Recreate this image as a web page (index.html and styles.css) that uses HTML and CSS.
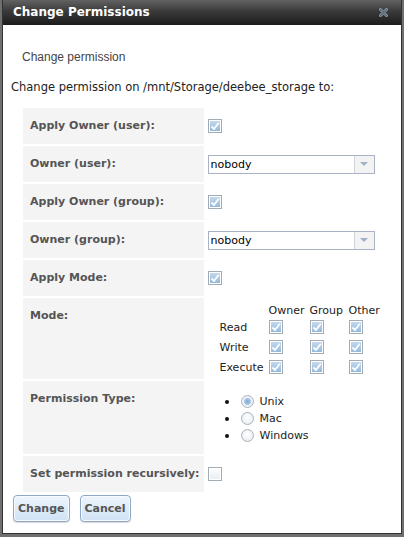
FILE: index.html
```html
<!DOCTYPE html>
<html>
<head>
<meta charset="utf-8">
<link rel="stylesheet" href="styles.css">
</head>
<body>
<div class="dialog">
  <div class="titlebar">
    <span class="title">Change Permissions</span>
    <svg class="close" width="9" height="9" viewBox="0 0 9 9"><path d="M1.5 1.5 L7.5 7.5 M7.5 1.5 L1.5 7.5" stroke="#8797a8" stroke-width="3" stroke-linecap="round"/><path d="M1.5 1.5 L7.5 7.5 M7.5 1.5 L1.5 7.5" stroke="#5b6b7c" stroke-width="1.4" stroke-linecap="round"/></svg>
  </div>
  <div class="content">
    <p class="sub">Change permission</p>
    <p class="path">Change permission on /mnt/Storage/deebee_storage to:</p>
    <table class="form">
      <tr><td class="lbl">Apply Owner (user):</td><td class="val"><span class="cb on"><svg viewBox="0 0 12 12"><path d="M2.5 6.5 L5 9 L9.8 2.8" /></svg></span></td></tr>
      <tr><td class="lbl">Owner (user):</td><td class="val"><div class="sel"><span class="seltext">nobody</span><span class="arrow"></span></div></td></tr>
      <tr><td class="lbl">Apply Owner (group):</td><td class="val"><span class="cb on"><svg viewBox="0 0 12 12"><path d="M2.5 6.5 L5 9 L9.8 2.8" /></svg></span></td></tr>
      <tr><td class="lbl">Owner (group):</td><td class="val"><div class="sel"><span class="seltext">nobody</span><span class="arrow"></span></div></td></tr>
      <tr><td class="lbl">Apply Mode:</td><td class="val"><span class="cb on"><svg viewBox="0 0 12 12"><path d="M2.5 6.5 L5 9 L9.8 2.8" /></svg></span></td></tr>
      <tr><td class="lbl">Mode:</td><td class="val">
        <table class="mode">
          <tr class="hdr"><td></td><td>Owner</td><td>Group</td><td>Other</td></tr>
          <tr><td>Read</td>
            <td><span class="cb on"><svg viewBox="0 0 12 12"><path d="M2.5 6.5 L5 9 L9.8 2.8" /></svg></span></td>
            <td><span class="cb on"><svg viewBox="0 0 12 12"><path d="M2.5 6.5 L5 9 L9.8 2.8" /></svg></span></td>
            <td><span class="cb on"><svg viewBox="0 0 12 12"><path d="M2.5 6.5 L5 9 L9.8 2.8" /></svg></span></td></tr>
          <tr><td>Write</td>
            <td><span class="cb on"><svg viewBox="0 0 12 12"><path d="M2.5 6.5 L5 9 L9.8 2.8" /></svg></span></td>
            <td><span class="cb on"><svg viewBox="0 0 12 12"><path d="M2.5 6.5 L5 9 L9.8 2.8" /></svg></span></td>
            <td><span class="cb on"><svg viewBox="0 0 12 12"><path d="M2.5 6.5 L5 9 L9.8 2.8" /></svg></span></td></tr>
          <tr><td>Execute</td>
            <td><span class="cb on"><svg viewBox="0 0 12 12"><path d="M2.5 6.5 L5 9 L9.8 2.8" /></svg></span></td>
            <td><span class="cb on"><svg viewBox="0 0 12 12"><path d="M2.5 6.5 L5 9 L9.8 2.8" /></svg></span></td>
            <td><span class="cb on"><svg viewBox="0 0 12 12"><path d="M2.5 6.5 L5 9 L9.8 2.8" /></svg></span></td></tr>
        </table>
      </td></tr>
      <tr><td class="lbl">Permission Type:</td><td class="val">
        <ul class="radios">
          <li><span class="rb on"></span>Unix</li>
          <li><span class="rb"></span>Mac</li>
          <li><span class="rb"></span>Windows</li>
        </ul>
      </td></tr>
      <tr><td class="lbl">Set permission recursively:</td><td class="val"><span class="cb"></span></td></tr>
    </table>
    <div class="buttons">
      <button class="btn">Change</button>
      <button class="btn">Cancel</button>
    </div>
  </div>
</div>
</body>
</html>
```
FILE: styles.css
```css
html, body {
  margin: 0;
  padding: 0;
}
body {
  background: #6f6f6f;
  width: 404px;
  height: 537px;
  overflow: hidden;
  font-family: "DejaVu Sans", Verdana, sans-serif;
  font-size: 11px;
}
.dialog {
  margin-left: 3px;
  width: 398px;
  height: 533px;
  background: #fff;
  box-shadow: 0 0 0 1px #333;
}
.titlebar {
  height: 25px;
  background: linear-gradient(#626262, #3a3a3a 45%, #1c1c1c);
  display: flex;
  align-items: center;
  justify-content: space-between;
  padding: 0 13px 0 10px;
}
.title {
  color: #fff;
  font-weight: bold;
  font-size: 12px;
  line-height: 14px;
  margin-top: -1px;
}
.close {
  display: block;
  margin-top: -1px;
}
.content {
  padding-left: 8px;
}
.sub {
  margin: 25px 0 0 11px;
  font-family: "Liberation Sans", Arial, sans-serif;
  font-size: 12px;
  line-height: 14px;
  color: #444;
}
.path {
  margin: 16px 0 0 0;
  font-size: 11.5px;
  line-height: 14px;
  color: #222;
}
.form {
  margin: 12px 0 0 10px;
  border-collapse: separate;
  border-spacing: 2px;
}
.lbl {
  width: 169px;
  box-sizing: content-box;
  background: #f4f4f4;
  color: #555;
  font-weight: bold;
  vertical-align: top;
  padding: 11px 4px 11px 7px;
  line-height: 14px;
  white-space: nowrap;
}
.val {
  padding: 0 0 0 2px;
  vertical-align: middle;
}
.cb {
  display: inline-block;
  box-sizing: border-box;
  width: 14px;
  height: 14px;
  border: 1px solid #a3abb3;
  box-shadow: inset 0 0 0 1px #fff;
  background: linear-gradient(#fdfeff, #e6edf4);
  vertical-align: middle;
}
.cb.on {
  background: linear-gradient(#c9dcf0, #8fb5dc);
}
.cb svg {
  display: block;
  width: 12px;
  height: 12px;
}
.cb svg path {
  fill: none;
  stroke: #fff;
  stroke-width: 1.8;
  stroke-linejoin: round;
}
.sel {
  box-sizing: border-box;
  width: 167px;
  height: 19px;
  border: 1px solid #aab3c6;
  display: flex;
  background: #fff;
}
.seltext {
  flex: 1;
  padding-left: 2px;
  line-height: 17px;
  color: #000;
}
.arrow {
  width: 19px;
  border-left: 1px solid #d0d4dc;
  background: #f3f3f3;
  display: flex;
  align-items: center;
  justify-content: center;
}
.arrow::after {
  content: "";
  width: 0;
  height: 0;
  border-left: 4px solid transparent;
  border-right: 4px solid transparent;
  border-top: 4px solid #9fb0c8;
}
.mode {
  margin: 2px 0 2px 12px;
  border-collapse: collapse;
  color: #222;
}
.mode td {
  padding: 0;
  height: 20px;
  vertical-align: middle;
  white-space: nowrap;
}
.mode tr.hdr td {
  height: 17px;
  vertical-align: bottom;
  line-height: 13px;
}
.mode td:nth-child(1) { width: 49px; }
.mode td:nth-child(2) { width: 41px; }
.mode td:nth-child(3) { width: 39px; }
.radios {
  margin: 12px 0 10px 0;
  padding: 0 0 0 17px;
  color: #222;
  list-style: none;
}
.radios li {
  height: 17px;
  line-height: 17px;
  display: flex;
  align-items: center;
}
.radios li::before {
  content: "";
  width: 4px;
  height: 4px;
  border-radius: 50%;
  background: #111;
  margin-right: 12px;
}
.rb {
  display: inline-block;
  box-sizing: border-box;
  width: 13px;
  height: 13px;
  border-radius: 50%;
  border: 1px solid #aab2ba;
  background: radial-gradient(circle at 50% 40%, #ffffff, #e3e9ef);
  margin-right: 6px;
}
.rb.on {
  background: radial-gradient(circle, #7ea9d3 0, #a9c7e4 3px, #e9f0f7 4px, #f4f7fa 6px);
}
.buttons {
  display: flex;
  gap: 10px;
  margin: 1px 0 0 2px;
}
.btn {
  height: 27px;
  padding: 0 4px;
  font-family: "DejaVu Sans", Verdana, sans-serif;
  font-size: 11px;
  font-weight: bold;
  color: #555;
  border: 1px solid #8ea9c6;
  border-radius: 4px;
  background: linear-gradient(#eef5fc, #cfe2f4);
  box-shadow: inset 0 0 0 1px #f7fbff, 0 1px 1px rgba(0,0,0,0.15);
}
```
